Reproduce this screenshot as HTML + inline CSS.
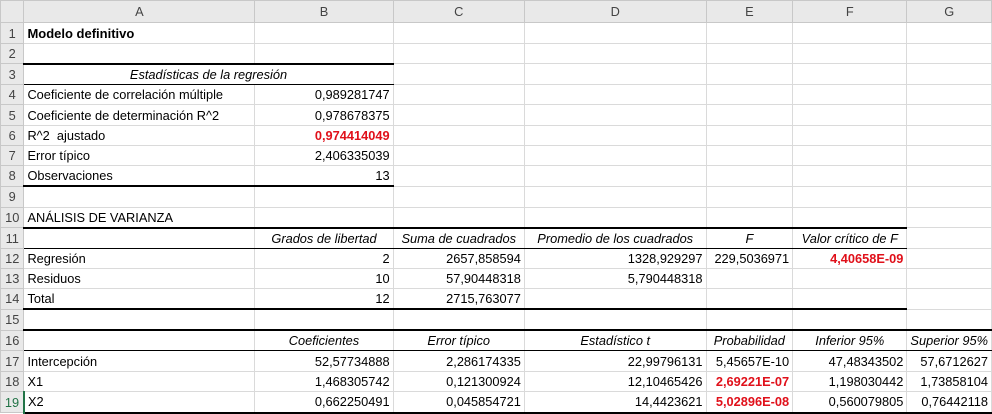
<!DOCTYPE html>
<html><head><meta charset="utf-8"><style>
body{margin:0;width:992px;height:414px;overflow:hidden;background:#fff;font-family:"Liberation Sans",sans-serif;font-size:12.8px;color:#000}
table{border-collapse:collapse;table-layout:fixed;position:absolute;left:0;top:0}
td{border:1px solid #dadada;padding:0 3px;white-space:nowrap;overflow:hidden;height:20px;line-height:19px;box-sizing:border-box}
tr.o td{height:21px}
.h td{background:#e9e9e9;color:#444;text-align:center;height:22px;border-color:#c8c8c8}
td.rh{background:#e9e9e9;color:#444;text-align:center;padding:0;border-color:#c8c8c8}
.r{text-align:right}.c{text-align:center}.i{font-style:italic}.b{font-weight:bold}
.red{color:#e0101a;font-weight:bold}
.bt{border-top:2px solid #000}.bb{border-bottom:2px solid #000}.tb{border-bottom:1px solid #000}
</style></head><body>
<table>
<colgroup><col style="width:24px"><col style="width:233px"><col style="width:140px"><col style="width:132px"><col style="width:183px"><col style="width:87px"><col style="width:115px"><col style="width:78px"></colgroup>
<tr class="h"><td style="background:#e9e9e9"></td><td>A</td><td>B</td><td>C</td><td>D</td><td>E</td><td>F</td><td>G</td></tr>
<tr class="o"><td class="rh">1</td><td class="b" style="font-size:13px">Modelo definitivo</td><td></td><td></td><td></td><td></td><td></td><td></td></tr>
<tr><td class="rh">2</td><td class="bb"></td><td class="bb"></td><td></td><td></td><td></td><td></td><td></td></tr>
<tr class="o"><td class="rh">3</td><td colspan="2" class="c i tb">Estadísticas de la regresión</td><td></td><td></td><td></td><td></td><td></td></tr>
<tr><td class="rh">4</td><td>Coeficiente de correlación múltiple</td><td class="r">0,989281747</td><td></td><td></td><td></td><td></td><td></td></tr>
<tr class="o"><td class="rh">5</td><td>Coeficiente de determinación R^2</td><td class="r">0,978678375</td><td></td><td></td><td></td><td></td><td></td></tr>
<tr><td class="rh">6</td><td>R^2&nbsp; ajustado</td><td class="r red">0,974414049</td><td></td><td></td><td></td><td></td><td></td></tr>
<tr><td class="rh">7</td><td>Error típico</td><td class="r">2,406335039</td><td></td><td></td><td></td><td></td><td></td></tr>
<tr><td class="rh">8</td><td class="bb">Observaciones</td><td class="r bb">13</td><td></td><td></td><td></td><td></td><td></td></tr>
<tr class="o"><td class="rh">9</td><td></td><td></td><td></td><td></td><td></td><td></td><td></td></tr>
<tr><td class="rh">10</td><td class="bb">ANÁLISIS DE VARIANZA</td><td class="bb"></td><td class="bb"></td><td class="bb"></td><td class="bb"></td><td class="bb"></td><td></td></tr>
<tr class="o"><td class="rh">11</td><td class="tb"></td><td class="c i tb">Grados de libertad</td><td class="c i tb">Suma de cuadrados</td><td class="c i tb">Promedio de los cuadrados</td><td class="c i tb">F</td><td class="c i tb">Valor crítico de F</td><td></td></tr>
<tr><td class="rh">12</td><td>Regresión</td><td class="r">2</td><td class="r">2657,858594</td><td class="r">1328,929297</td><td class="r">229,5036971</td><td class="r red">4,40658E-09</td><td></td></tr>
<tr><td class="rh">13</td><td>Residuos</td><td class="r">10</td><td class="r">57,90448318</td><td class="r">5,790448318</td><td></td><td></td><td></td></tr>
<tr><td class="rh">14</td><td class="bb">Total</td><td class="r bb">12</td><td class="r bb">2715,763077</td><td class="bb"></td><td class="bb"></td><td class="bb"></td><td></td></tr>
<tr class="o"><td class="rh">15</td><td class="bb"></td><td class="bb"></td><td class="bb"></td><td class="bb"></td><td class="bb"></td><td class="bb"></td><td class="bb"></td></tr>
<tr><td class="rh">16</td><td class="tb"></td><td class="c i tb">Coeficientes</td><td class="c i tb">Error típico</td><td class="c i tb">Estadístico t</td><td class="c i tb">Probabilidad</td><td class="c i tb">Inferior 95%</td><td class="c i tb">Superior 95%</td></tr>
<tr class="o"><td class="rh">17</td><td>Intercepción</td><td class="r">52,57734888</td><td class="r">2,286174335</td><td class="r">22,99796131</td><td class="r">5,45657E-10</td><td class="r">47,48343502</td><td class="r">57,6712627</td></tr>
<tr><td class="rh">18</td><td>X1</td><td class="r">1,468305742</td><td class="r">0,121300924</td><td class="r">12,10465426</td><td class="r red">2,69221E-07</td><td class="r">1,198030442</td><td class="r">1,73858104</td></tr>
<tr class="o"><td class="rh" style="color:#217346;border-right:2px solid #217346">19</td><td class="bb">X2</td><td class="r bb">0,662250491</td><td class="r bb">0,045854721</td><td class="r bb">14,4423621</td><td class="r bb red">5,02896E-08</td><td class="r bb">0,560079805</td><td class="r bb">0,76442118</td></tr>
</table>
</body></html>
